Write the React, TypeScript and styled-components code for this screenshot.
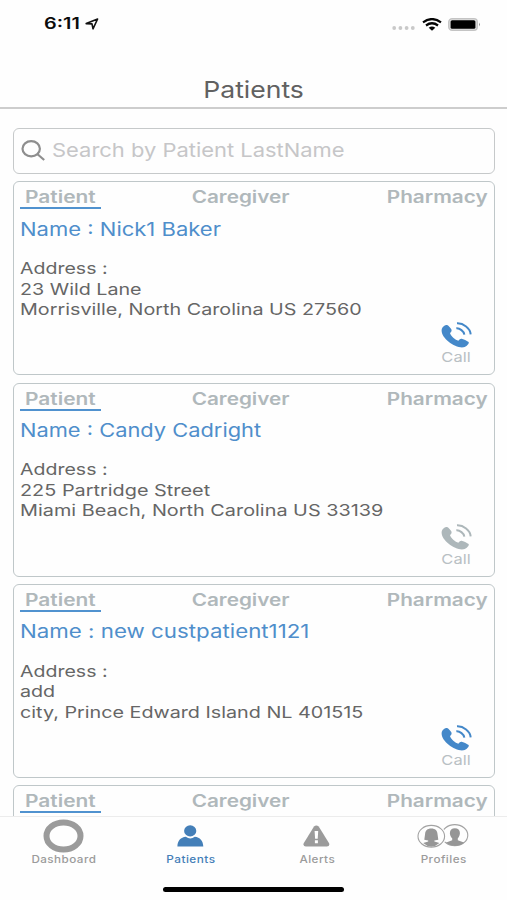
import React from "react";
import styled, { createGlobalStyle } from "styled-components";

const GlobalStyle = createGlobalStyle`
  * { box-sizing: border-box; }
  html, body { margin: 0; padding: 0; background: #fff; overflow: hidden; }
  body { font-family: Inter, "Liberation Sans", sans-serif; }
`;

const Screen = styled.div`
  width: 507px;
  height: 900px;
  display: flex;
  flex-direction: column;
  background: #fefefe;
  overflow: hidden;
`;

/* Wide lettering: glyphs are stretched horizontally from the chosen edge. */
const Wide = styled.span<{ $x: number; $from?: string }>`
  display: inline-block;
  white-space: pre;
  transform: scaleX(${(p) => p.$x});
  transform-origin: ${(p) => p.$from ?? "left"} center;
`;

const StatusBar = styled.header`
  flex: none;
  height: 48px;
  padding: 0 26px 0 43.5px;
  display: flex;
  align-items: center;
  justify-content: space-between;
`;

const Clock = styled.div`
  display: flex;
  align-items: center;
  width: 55px;
  justify-content: space-between;
  font-size: 15.5px;
  font-weight: 600;
  line-height: 20px;
  color: #0c0c0c;
`;

const StatusIcons = styled.div`
  display: flex;
  align-items: center;
  gap: 6.5px;
`;

const DotsWrap = styled.div`
  display: flex;
  padding-top: 7px;
`;

const TitleBar = styled.div`
  flex: none;
  height: 61px;
  display: flex;
  justify-content: center;
  padding-top: 26px;
  border-bottom: 2px solid #cdcdcd;
  font-size: 23px;
  line-height: 32px;
  color: #616161;
`;

const Content = styled.main`
  flex: none;
  height: 707px;
  padding: 18.5px 12.5px 0 13px;
  overflow: hidden;
`;

const SearchBox = styled.div`
  height: 46.5px;
  border: 1.5px solid #c6c9ca;
  border-radius: 6px;
  display: flex;
  align-items: center;
  gap: 7px;
  padding: 0 7px;
  font-size: 19px;
  line-height: 24px;
  color: #c6c6c8;
`;

const Card = styled.section`
  height: 194px;
  margin-top: 7.3px;
  border: 1.5px solid #bfc7c9;
  border-radius: 6px;
  padding: 5px 5.5px 0 5.5px;
  display: flex;
  flex-direction: column;
`;

const CardTabs = styled.div`
  display: grid;
  grid-template-columns: 81px 1fr 108px;
  font-size: 16.8px;
  font-weight: 600;
  line-height: 20px;
  height: 22px;
  color: #b0b8bb;
`;

const CardTab = styled.div<{ $active?: boolean; $align?: string }>`
  text-align: ${(p) => p.$align ?? "center"};
  height: 22px;
  border-bottom: 2px solid ${(p) => (p.$active ? "#5092cf" : "transparent")};
`;

const Name = styled.div`
  margin-top: 6.3px;
  font-size: 18.5px;
  line-height: 26px;
  color: #4f8ecb;
`;

const Address = styled.div`
  margin-top: 16.5px;
  font-size: 16.3px;
  line-height: 20.4px;
  color: #666;
  display: flex;
  flex-direction: column;
  align-items: flex-start;
`;

const CallButton = styled.div<{ $on: boolean }>`
  align-self: flex-end;
  margin: 3.1px 16px 0 0;
  width: 32px;
  display: flex;
  flex-direction: column;
  align-items: center;
  color: ${(p) => (p.$on ? "#4488c9" : "#adb7ba")};
`;

const CallLabel = styled.div`
  margin-top: 1px;
  font-size: 13.5px;
  line-height: 16px;
  color: #b9c0c4;
`;

const BottomBar = styled.nav`
  flex: none;
  height: 84px;
  border-top: 1px solid #ececec;
  background: #fefefe;
  display: grid;
  grid-template-columns: repeat(4, 126.5px);
  grid-template-rows: 50px 33px;
  padding-left: 0.7px;
`;

const NavItem = styled.div<{ $active?: boolean }>`
  display: flex;
  flex-direction: column;
  align-items: center;
  color: ${(p) => (p.$active ? "#447fb8" : "#9b9b9b")};
`;

const NavIcon = styled.div`
  height: 36px;
  padding-top: 1.6px;
  display: flex;
  align-items: center;
`;

const NavLabel = styled.div`
  font-size: 10px;
  font-weight: 500;
  line-height: 12px;
  letter-spacing: 0.4px;
  padding-left: 0.8px;
`;

const HomeIndicator = styled.div`
  grid-column: 1 / -1;
  justify-self: center;
  margin-top: 20px;
  width: 181px;
  height: 5px;
  border-radius: 3px;
  background: #000;
`;

const LocationArrow = () => (
  <svg width="14" height="12" viewBox="0 0 14 12">
    <path d="M1.2 5.6 12.6 1 8 10.8 7 5.9Z" fill="none" stroke="#111" strokeWidth="1.6" strokeLinejoin="round" />
  </svg>
);

const SignalDots = () => (
  <DotsWrap>
    <svg width="23" height="4" viewBox="0 0 23 4">
      {[2.2, 8.4, 14.6, 20.8].map((x) => (
        <circle key={x} cx={x} cy="2" r="1.9" fill="#c9c9c9" />
      ))}
    </svg>
  </DotsWrap>
);

const Wifi = () => (
  <svg width="20" height="13" viewBox="0 0 20 13">
    <g fill="none" stroke="#050505" strokeWidth="2.2">
      <path d="M1 4.3Q10-2.2 19 4.3" />
      <path d="M4 7.5Q10 3 16 7.5" />
    </g>
    <path d="M6.7 9.7Q10 7.4 13.3 9.7L10 12.7Z" fill="#050505" />
  </svg>
);

const Battery = () => (
  <svg width="33" height="13" viewBox="0 0 33 13">
    <rect x="0.7" y="0.7" width="28.6" height="11.6" rx="3.4" fill="#ddd" stroke="#c4c4c4" strokeWidth="1.3" />
    <rect x="2.6" y="2.2" width="24.8" height="8.6" rx="1.6" fill="#000" />
    <path d="M31 4.6q1.6 1.9 0 3.8z" fill="#777" />
  </svg>
);

const SearchIcon = () => (
  <svg width="24" height="21" viewBox="0 0 24 21" fill="none" stroke="#8e8e8e" strokeWidth="2.2">
    <ellipse cx="10.2" cy="8.7" rx="8.7" ry="7.6" />
    <path d="M16.3 14 23.2 20" />
  </svg>
);

const PhoneIcon = () => (
  <svg width="31" height="26" viewBox="63 39 93 78" fill="none">
    <path
      d="M65 62C66 54 75 47 81 48C85 49 91 56 94 61C96 66 94 69 90 72C91 80 107 94 115 95C119 91 122 88 127 90C133 92 141 96 146 99C148 104 140 113 131 115C105 119 62 87 65 62Z"
      fill="currentColor"
    />
    <path d="M111 43C130 42 151 58 152 76M109 58C119 57 132 67 133 77" stroke="currentColor" strokeWidth="6" />
  </svg>
);

const DashboardIcon = () => (
  <svg width="41" height="34" viewBox="0 0 41 34">
    <ellipse cx="20.5" cy="17" rx="17" ry="13.6" fill="none" stroke="currentColor" strokeWidth="6" />
  </svg>
);

const PersonIcon = () => (
  <svg width="27" height="22" viewBox="0 0 27 22" fill="currentColor">
    <ellipse cx="13.2" cy="5.9" rx="6.1" ry="5.6" />
    <path d="M0.4 21.5C0.5 15.6 3.8 12.3 8.8 11.8Q13.3 15 17.8 11.8C23 12.4 26.1 15.8 26.3 21.5Z" />
  </svg>
);

const AlertIcon = () => (
  <svg width="27" height="22" viewBox="0 0 27 22">
    <path d="M11 1.6Q13.3-.7 15.7 1.6L26.1 18.2Q27 21.4 23.8 21.5H2.9Q-.3 21.4.7 18.2Z" fill="currentColor" />
    <path d="M11.6 6h3.6l-.5 7.8h-2.6zM11.9 15.3h3v3h-3z" fill="#fff" />
  </svg>
);

const ProfilesIcon = () => (
  <svg width="52" height="24" viewBox="0 0 52 24">
    <ellipse cx="37.8" cy="11.2" rx="13" ry="10.6" fill="#fefefe" stroke="#a2a2a2" strokeWidth="1.1" />
    <path d="M37.8 4.2c3.3 0 5.3 1.7 5.1 5.2c-.2 2.2-1.1 3.8-2.1 4.8v2l6.8 2.6q-9.5 6.6-19 0l6.6-2.6v-2c-1.2-1-2.1-2.6-2.3-4.8c-.2-3.5 1.8-5.2 4.9-5.2z" fill="#969696" />
    <ellipse cx="14.3" cy="12.3" rx="15" ry="12.4" fill="#fefefe" />
    <ellipse cx="14.3" cy="12.3" rx="13.3" ry="10.9" fill="#fefefe" stroke="#a2a2a2" strokeWidth="1.1" />
    <path d="M14.3 4.4c4 0 6 2.1 6.2 5.5l.8 5.9-3.9.6v1l5 1.7q-8.1 7.4-16.2 0l5-1.7v-1l-3.9-.6.8-5.9c.2-3.4 2.2-5.5 6.2-5.5z" fill="#969696" />
  </svg>
);

interface Patient {
  name: string;
  nameScale: number;
  lines: { text: string; scale: number }[];
  callable: boolean;
}

const patients: Patient[] = [
  {
    name: "Nick1 Baker",
    nameScale: 1.19,
    lines: [
      { text: "23 Wild Lane", scale: 1.21 },
      { text: "Morrisville, North Carolina US 27560", scale: 1.213 },
    ],
    callable: true,
  },
  {
    name: "Candy Cadright",
    nameScale: 1.181,
    lines: [
      { text: "225 Partridge Street", scale: 1.22 },
      { text: "Miami Beach, North Carolina US 33139", scale: 1.219 },
    ],
    callable: false,
  },
  {
    name: "new custpatient1121",
    nameScale: 1.205,
    lines: [
      { text: "add", scale: 1.21 },
      { text: "city, Prince Edward Island NL 401515", scale: 1.213 },
    ],
    callable: true,
  },
  { name: "", nameScale: 1, lines: [], callable: true },
];

const PatientCard = ({ patient }: { patient: Patient }) => (
  <Card>
    <CardTabs>
      <CardTab $active><Wide $x={1.245} $from="center">Patient</Wide></CardTab>
      <CardTab><Wide $x={1.235} $from="center">Caregiver</Wide></CardTab>
      <CardTab $align="right"><Wide $x={1.235} $from="right">Pharmacy</Wide></CardTab>
    </CardTabs>
    {patient.name && (
      <>
        <Name><Wide $x={patient.nameScale}>{`Name : ${patient.name}`}</Wide></Name>
        <Address>
          <Wide $x={1.2}>Address :</Wide>
          {patient.lines.map((line) => (
            <Wide key={line.text} $x={line.scale}>{line.text}</Wide>
          ))}
        </Address>
        <CallButton $on={patient.callable}>
          <PhoneIcon />
          <CallLabel><Wide $x={1.22} $from="center">Call</Wide></CallLabel>
        </CallButton>
      </>
    )}
  </Card>
);

const navItems = [
  { label: "Dashboard", icon: <DashboardIcon />, scale: 1.165 },
  { label: "Patients", icon: <PersonIcon />, active: true, scale: 1.18 },
  { label: "Alerts", icon: <AlertIcon />, scale: 1.17 },
  { label: "Profiles", icon: <ProfilesIcon />, scale: 1.17 },
];

export default function App() {
  return (
    <>
      <GlobalStyle />
      <Screen>
        <StatusBar>
          <Clock>
            <Wide $x={1.28}>6:11</Wide>
            <LocationArrow />
          </Clock>
          <StatusIcons>
            <SignalDots />
            <Wifi />
            <Battery />
          </StatusIcons>
        </StatusBar>
        <TitleBar><Wide $x={1.155} $from="center">Patients</Wide></TitleBar>
        <Content>
          <SearchBox>
            <SearchIcon />
            <Wide $x={1.154}>Search by Patient LastName</Wide>
          </SearchBox>
          {patients.map((patient, i) => (
            <PatientCard key={i} patient={patient} />
          ))}
        </Content>
        <BottomBar>
          {navItems.map((item) => (
            <NavItem key={item.label} $active={item.active}>
              <NavIcon>{item.icon}</NavIcon>
              <NavLabel><Wide $x={item.scale} $from="center">{item.label}</Wide></NavLabel>
            </NavItem>
          ))}
          <HomeIndicator />
        </BottomBar>
      </Screen>
    </>
  );
}
